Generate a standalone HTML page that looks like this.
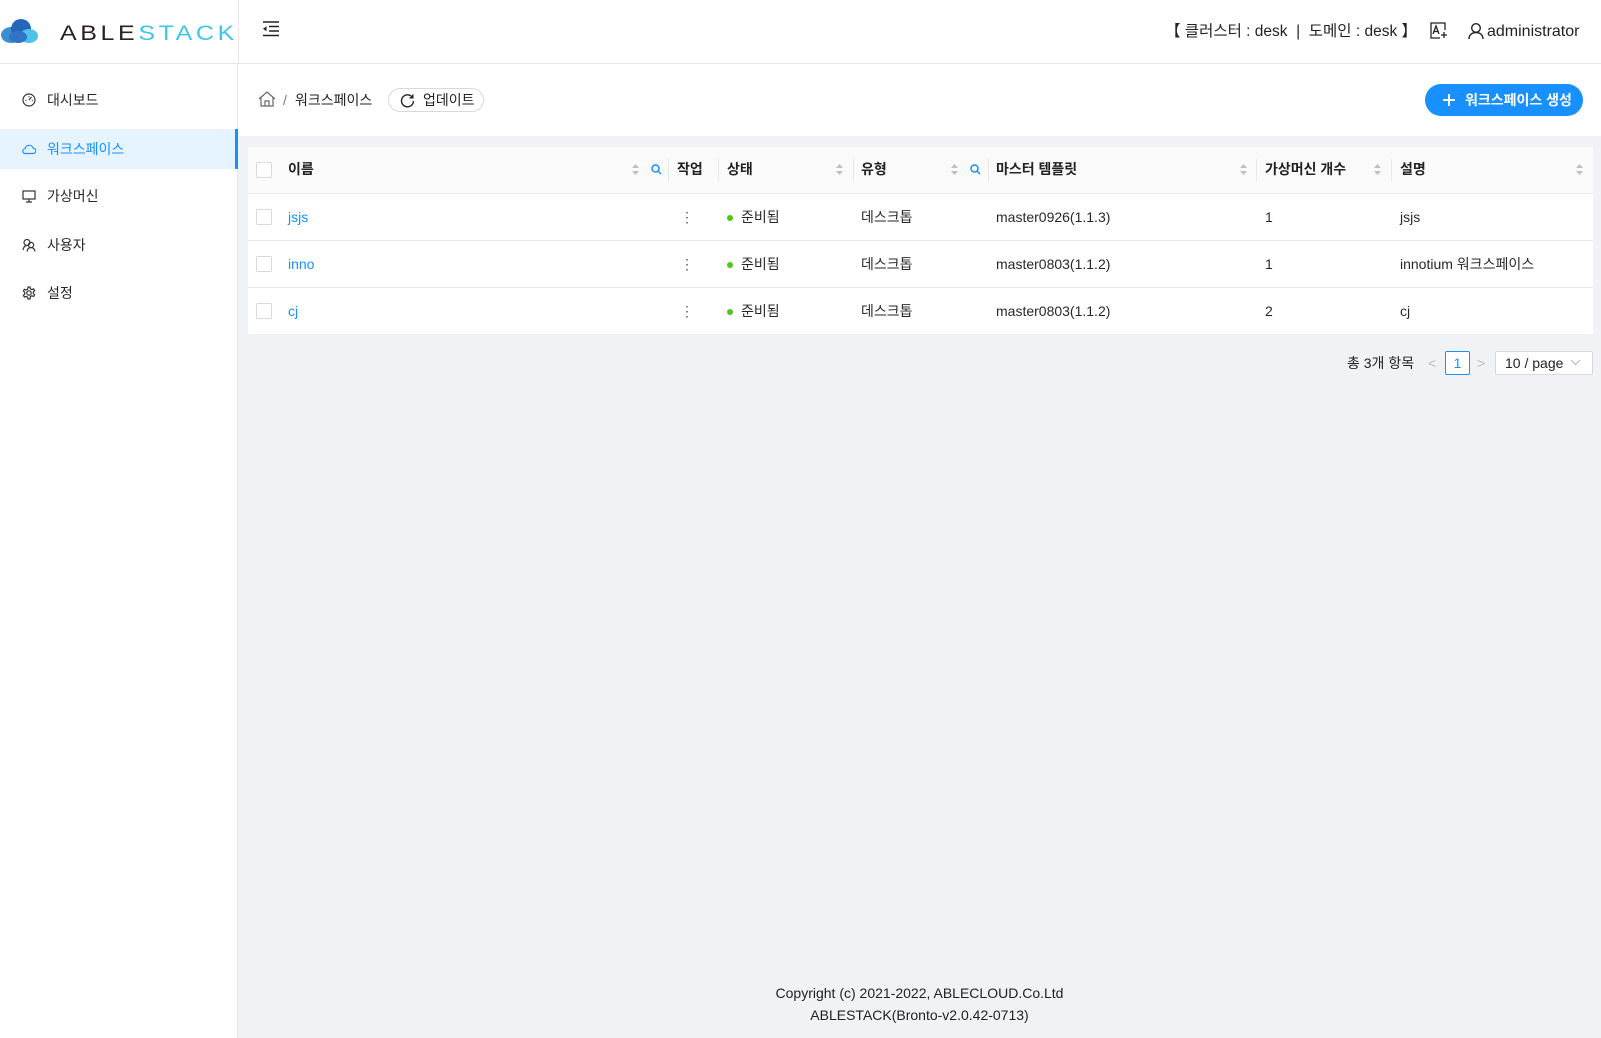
<!DOCTYPE html>
<html><head><meta charset="utf-8"><style>
*{box-sizing:border-box;margin:0;padding:0}
body{width:1601px;height:1038px;overflow:hidden;background:#f0f2f5;font-family:"Liberation Sans","Noto Sans CJK KR",sans-serif;font-size:14px;color:rgba(0,0,0,.85);position:relative}
.abs{position:absolute}
.side{left:0;top:0;width:238px;height:1038px;background:#fff;border-right:1px solid #e8e8e8}
.hdr{left:0;top:0;width:1601px;height:64px;background:#fff;border-bottom:1px solid #e6e6e6}
.menu{left:0;width:238px;height:40px;display:flex;align-items:center;padding-left:22px}
.menu svg{margin-right:11px}
.bc{left:238px;top:64px;width:1363px;height:72px;background:#fff}
.cb{width:16px;height:16px;border:1px solid #d9d9d9;border-radius:2px;background:#fff}
.sep{width:1px;height:22px;background:#e8e8e8;top:159px}
.row{left:248px;width:1345px;height:47px;background:#fff;border-top:1px solid #eaeaea}
.t{position:absolute;top:0;line-height:46px}
.h{position:absolute;top:158px;line-height:22px;font-weight:bold;color:#222}
</style></head><body>
<div class="abs side"></div>
<div class="abs hdr"></div>
<svg class="abs" style="left:0;top:17px" width="40" height="29" viewBox="0 0 40 29"><ellipse cx="11" cy="18" rx="10" ry="8" fill="#3a8fd0"/><circle cx="21" cy="12" r="10" fill="#2566b8"/><ellipse cx="29" cy="19" rx="9" ry="7" fill="#4ec3ea"/><ellipse cx="18" cy="20" rx="9" ry="6" fill="#3173c4"/></svg>
<div class="abs" style="left:60px;top:19px;font-size:25px;letter-spacing:3.6px;line-height:28px;transform:scaleY(0.85);transform-origin:left center"><span style="color:#2b211f">ABLE</span><span style="color:#3ec6ea">STACK</span></div>
<div class="abs" style="left:238px;top:0;width:1px;height:64px;background:#e8e8e8"></div>
<svg class="abs" style="left:263px;top:21px" width="17" height="16" viewBox="0 0 17 16" fill="none" stroke="#222" stroke-width="1.4"><path d="M0 1h16M6 5.5h10M6 10h10M0 14.5h16"/><path d="M0 7.7l3.5-2.5v5z" fill="#222" stroke="none"/></svg>
<div class="abs" style="left:1165px;top:19px;font-size:15.5px;line-height:26px;color:#222">【 클러스터 : desk &nbsp;|&nbsp; 도메인 : desk 】</div>
<svg class="abs" style="left:1430px;top:22px" width="18" height="18" viewBox="0 0 18 18" fill="none" stroke="#222" stroke-width="1.3"><path d="M10 16H1V1h14v7"/><path d="M3 12l3-8 3 8M4.2 9.5h3.6"/><path d="M11 13h6M14 10v6"/></svg>
<svg class="abs" style="left:1468px;top:22px" width="16" height="18" viewBox="0 0 16 18" fill="none" stroke="#222" stroke-width="1.4"><circle cx="8" cy="6" r="4.3"/><path d="M1 17c0-4 3-6.5 7-6.5s7 2.5 7 6.5"/></svg>
<div class="abs" style="left:1487px;top:19px;font-size:16px;line-height:26px;color:#222">administrator</div>
<div class="abs menu" style="top:80px"><svg width="14" height="14" viewBox="0 0 14 14" fill="none" stroke="#333" stroke-width="1.2"><circle cx="7" cy="7" r="6"/><path d="M7 7l2.5-3M3.5 7.5h1M7 3.2v1M9.8 7.5h1"/></svg>대시보드</div>
<div class="abs menu" style="top:129px;background:#e6f4ff;color:#1890ff"><svg width="14" height="14" viewBox="0 0 14 14" fill="none" stroke="#1890ff" stroke-width="1.2"><path d="M3.5 11.5h7.5a2.6 2.6 0 0 0 .3-5.2 4.3 4.3 0 0 0-8.3.4 2.4 2.4 0 0 0 .5 4.8z"/></svg>워크스페이스</div>
<div class="abs" style="left:235px;top:129px;width:3px;height:40px;background:#1890ff"></div>
<div class="abs menu" style="top:176px"><svg width="14" height="14" viewBox="0 0 14 14" fill="none" stroke="#333" stroke-width="1.2"><rect x="1" y="2" width="12" height="8"/><path d="M7 10v3M4 13h6"/></svg>가상머신</div>
<div class="abs menu" style="top:225px"><svg width="14" height="14" viewBox="0 0 14 14" fill="none" stroke="#333" stroke-width="1.2"><circle cx="5" cy="4.5" r="3"/><circle cx="9" cy="7" r="2.6"/><path d="M1 12c.5-3 2-4.5 4-4.5M5 13.5c.5-3 2-4 4-4s3.5 1 4 4"/></svg>사용자</div>
<div class="abs menu" style="top:273px"><svg width="14" height="14" viewBox="0 0 14 14" fill="none" stroke="#333" stroke-width="1.2"><circle cx="7" cy="7" r="2.2"/><path d="M6 1h2l.4 1.8 1.5.8 1.7-.7 1 1.7-1.3 1.3v1.6l1.3 1.3-1 1.7-1.7-.7-1.5.8L8 13H6l-.4-1.8-1.5-.8-1.7.7-1-1.7 1.3-1.3V6.3L1.4 5l1-1.7 1.7.7 1.5-.8z"/></svg>설정</div>
<div class="abs bc"></div>
<svg class="abs" style="left:258px;top:91px" width="18" height="16" viewBox="0 0 18 16" fill="none" stroke="#666" stroke-width="1.2"><path d="M1 8L9 1l8 7M3 6.5V15h12V6.5M7 15v-5h4v5"/></svg>
<div class="abs" style="left:283px;top:89px;line-height:22px;color:#777">/</div>
<div class="abs" style="left:295px;top:89px;line-height:22px;color:#222">워크스페이스</div>
<div class="abs" style="left:388px;top:88px;width:96px;height:24px;border:1px solid #d9d9d9;border-radius:12px;background:#fff;line-height:22px;padding-left:34px;color:#222">업데이트</div>
<svg class="abs" style="left:400px;top:93px" width="15" height="15" viewBox="0 0 15 15" fill="none" stroke="#222" stroke-width="1.4"><path d="M12.5 4.5A6 6 0 1 0 13.5 8"/><path d="M12.8 1.5v3.3H9.5"/></svg>
<div class="abs" style="left:1425px;top:84px;width:158px;height:32px;border-radius:16px;background:#1890ff;color:#fff;line-height:32px;padding-left:40px;font-weight:bold;font-size:14px">워크스페이스 생성</div>
<svg class="abs" style="left:1442px;top:93px" width="14" height="14" viewBox="0 0 14 14" stroke="#fff" stroke-width="2"><path d="M7 1v12M1 7h12"/></svg>
<div class="abs" style="left:248px;top:147px;width:1345px;height:46px;background:#fafafa"></div>
<div class="abs cb" style="left:256px;top:162px"></div>
<div class="h" style="left:288px">이름</div>
<div class="h" style="left:677px">작업</div>
<div class="h" style="left:727px">상태</div>
<div class="h" style="left:861px">유형</div>
<div class="h" style="left:996px">마스터 템플릿</div>
<div class="h" style="left:1265px">가상머신 개수</div>
<div class="h" style="left:1400px">설명</div>
<div class="abs sep" style="left:668px"></div><div class="abs sep" style="left:718px"></div><div class="abs sep" style="left:853px"></div><div class="abs sep" style="left:988px"></div><div class="abs sep" style="left:1256px"></div><div class="abs sep" style="left:1391px"></div>
<svg width="0" height="0" style="position:absolute"><defs><g id="s"><path d="M0 4L3.5 0 7 4z" fill="#bfbfbf"/><path d="M0 7L3.5 11 7 7z" fill="#bfbfbf"/></g><g id="q" fill="none" stroke="#1890ff" stroke-width="1.5"><circle cx="4.5" cy="4.5" r="3.5"/><path d="M7 7l3 3"/></g></defs></svg>
<svg class="abs" style="left:632px;top:164px" width="7" height="11"><use href="#s"/></svg>
<svg class="abs" style="left:651px;top:164px" width="11" height="11"><use href="#q"/></svg>
<svg class="abs" style="left:836px;top:164px" width="7" height="11"><use href="#s"/></svg>
<svg class="abs" style="left:951px;top:164px" width="7" height="11"><use href="#s"/></svg>
<svg class="abs" style="left:970px;top:164px" width="11" height="11"><use href="#q"/></svg>
<svg class="abs" style="left:1240px;top:164px" width="7" height="11"><use href="#s"/></svg>
<svg class="abs" style="left:1374px;top:164px" width="7" height="11"><use href="#s"/></svg>
<svg class="abs" style="left:1576px;top:164px" width="7" height="11"><use href="#s"/></svg>
<div class="abs row" style="top:193px">
<div class="abs cb" style="left:8px;top:15px"></div>
<span class="t" style="left:40px;color:#1890ff">jsjs</span>
<span class="t" style="left:432px;color:#555">⋮</span>
<span class="abs" style="left:479px;top:21px;width:6px;height:6px;border-radius:3px;background:#52c41a"></span>
<span class="t" style="left:493px">준비됨</span><span class="t" style="left:613px">데스크톱</span><span class="t" style="left:748px">master0926(1.1.3)</span><span class="t" style="left:1017px">1</span><span class="t" style="left:1152px">jsjs</span></div>
<div class="abs row" style="top:240px">
<div class="abs cb" style="left:8px;top:15px"></div>
<span class="t" style="left:40px;color:#1890ff">inno</span>
<span class="t" style="left:432px;color:#555">⋮</span>
<span class="abs" style="left:479px;top:21px;width:6px;height:6px;border-radius:3px;background:#52c41a"></span>
<span class="t" style="left:493px">준비됨</span><span class="t" style="left:613px">데스크톱</span><span class="t" style="left:748px">master0803(1.1.2)</span><span class="t" style="left:1017px">1</span><span class="t" style="left:1152px">innotium 워크스페이스</span></div>
<div class="abs row" style="top:287px">
<div class="abs cb" style="left:8px;top:15px"></div>
<span class="t" style="left:40px;color:#1890ff">cj</span>
<span class="t" style="left:432px;color:#555">⋮</span>
<span class="abs" style="left:479px;top:21px;width:6px;height:6px;border-radius:3px;background:#52c41a"></span>
<span class="t" style="left:493px">준비됨</span><span class="t" style="left:613px">데스크톱</span><span class="t" style="left:748px">master0803(1.1.2)</span><span class="t" style="left:1017px">2</span><span class="t" style="left:1152px">cj</span></div>
<div class="abs" style="left:1347px;top:352px;line-height:22px;color:#222">총 3개 항목</div>
<div class="abs" style="left:1428px;top:352px;line-height:22px;color:#bbb">&lt;</div>
<div class="abs" style="left:1445px;top:351px;width:25px;height:24px;border:1px solid #1890ff;border-radius:2px;background:#fff;color:#1890ff;text-align:center;line-height:22px">1</div>
<div class="abs" style="left:1477px;top:352px;line-height:22px;color:#bbb">&gt;</div>
<div class="abs" style="left:1495px;top:351px;width:98px;height:24px;border:1px solid #d9d9d9;border-radius:2px;background:#fff;padding-left:9px;line-height:22px;color:#222">10 / page</div>
<svg class="abs" style="left:1570px;top:359px" width="11" height="7" fill="none" stroke="#bbb" stroke-width="1.2"><path d="M1 1l4.5 4.5L10 1"/></svg>
<div class="abs" style="left:238px;top:982px;width:1363px;text-align:center;line-height:22px;color:#222">Copyright (c) 2021-2022, ABLECLOUD.Co.Ltd<br>ABLESTACK(Bronto-v2.0.42-0713)</div>
</body></html>
